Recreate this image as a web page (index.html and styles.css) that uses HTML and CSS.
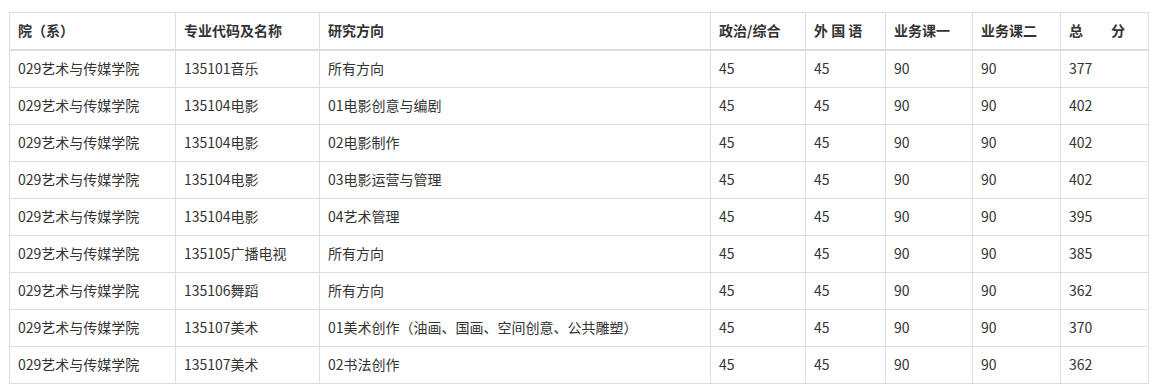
FILE: index.html
```html
<!DOCTYPE html>
<html lang="zh-CN">
<head>
  <meta charset="UTF-8">
  <title>复试分数线</title>
  <link rel="stylesheet" href="styles.css">
</head>
<body>
  <table class="score-table">
    <colgroup>
      <col class="c-dept">
      <col class="c-major">
      <col class="c-dir">
      <col class="c-pol">
      <col class="c-lang">
      <col class="c-sub1">
      <col class="c-sub2">
      <col class="c-total">
    </colgroup>
    <thead>
      <tr>
        <th>院（系）</th>
        <th>专业代码及名称</th>
        <th>研究方向</th>
        <th>政治/综合</th>
        <th>外 国 语</th>
        <th>业务课一</th>
        <th>业务课二</th>
        <th>总　　分</th>
      </tr>
    </thead>
    <tbody>
      <tr><td>029艺术与传媒学院</td><td>135101音乐</td><td>所有方向</td><td>45</td><td>45</td><td>90</td><td>90</td><td>377</td></tr>
      <tr><td>029艺术与传媒学院</td><td>135104电影</td><td>01电影创意与编剧</td><td>45</td><td>45</td><td>90</td><td>90</td><td>402</td></tr>
      <tr><td>029艺术与传媒学院</td><td>135104电影</td><td>02电影制作</td><td>45</td><td>45</td><td>90</td><td>90</td><td>402</td></tr>
      <tr><td>029艺术与传媒学院</td><td>135104电影</td><td>03电影运营与管理</td><td>45</td><td>45</td><td>90</td><td>90</td><td>402</td></tr>
      <tr><td>029艺术与传媒学院</td><td>135104电影</td><td>04艺术管理</td><td>45</td><td>45</td><td>90</td><td>90</td><td>395</td></tr>
      <tr><td>029艺术与传媒学院</td><td>135105广播电视</td><td>所有方向</td><td>45</td><td>45</td><td>90</td><td>90</td><td>385</td></tr>
      <tr><td>029艺术与传媒学院</td><td>135106舞蹈</td><td>所有方向</td><td>45</td><td>45</td><td>90</td><td>90</td><td>362</td></tr>
      <tr><td>029艺术与传媒学院</td><td>135107美术</td><td>01美术创作（油画、国画、空间创意、公共雕塑）</td><td>45</td><td>45</td><td>90</td><td>90</td><td>370</td></tr>
      <tr><td>029艺术与传媒学院</td><td>135107美术</td><td>02书法创作</td><td>45</td><td>45</td><td>90</td><td>90</td><td>362</td></tr>
    </tbody>
  </table>
</body>
</html>
```
FILE: styles.css
```css
body {
  margin: 0;
  padding: 12px 0 0 9px;
  background-color: #fff;
  font-family: "Microsoft YaHei", "Noto Sans CJK SC", sans-serif;
  font-size: 14px;
  color: #333;
}
.score-table {
  border-collapse: collapse;
  table-layout: fixed;
  width: 1140px;
}
.c-dept { width: 166px; }
.c-major { width: 144px; }
.c-dir { width: 391px; }
.c-pol { width: 95px; }
.c-lang { width: 80px; }
.c-sub1 { width: 87px; }
.c-sub2 { width: 88px; }
.c-total { width: 88px; }
.score-table th,
.score-table td {
  border: 1px solid #ddd;
  padding: 0 8px 2px;
  text-align: left;
  white-space: nowrap;
  line-height: 20px;
}
.score-table th {
  height: 34px;
  font-weight: bold;
  border-bottom: 2px solid #ddd;
}
.score-table td {
  height: 34px;
}
```
